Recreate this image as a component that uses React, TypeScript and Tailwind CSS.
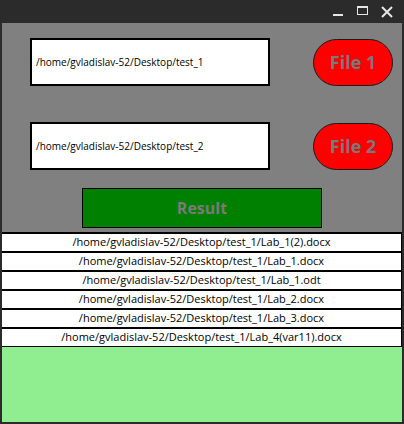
import React from 'react';

const files = [
  '/home/gvladislav-52/Desktop/test_1/Lab_1(2).docx',
  '/home/gvladislav-52/Desktop/test_1/Lab_1.docx',
  '/home/gvladislav-52/Desktop/test_1/Lab_1.odt',
  '/home/gvladislav-52/Desktop/test_1/Lab_2.docx',
  '/home/gvladislav-52/Desktop/test_1/Lab_3.docx',
  '/home/gvladislav-52/Desktop/test_1/Lab_4(var11).docx',
];

const font = { fontFamily: '"Open Sans", "Noto Sans", sans-serif' };

function PathRow({ path, label }: { path: string; label: string }) {
  return (
    <div className="flex items-center h-[48px] pl-[28px]">
      <div className="w-[240px] h-[48px] border-2 border-black bg-white flex items-center px-[4px] text-[10px] text-black">
        {path}
      </div>
      <button
        type="button"
        className="ml-[43px] w-[80px] h-[47px] rounded-full border border-[#1a1a1a] bg-[#ff0000] text-[18px] font-bold text-[#7a7a7a]"
      >
        {label}
      </button>
    </div>
  );
}

export default function App() {
  return (
    <div className="w-[404px] h-[424px] bg-[#2b2b2b] flex flex-col" style={font}>
      {/* title bar */}
      <div className="h-[23px] flex items-center justify-end gap-[13px] pr-[11px] shrink-0">
        <svg width="11" height="11" viewBox="0 0 11 11">
          <rect x="0" y="8" width="10" height="2" fill="#e6e6e6" />
        </svg>
        <svg width="11" height="11" viewBox="0 0 11 11">
          <rect x="0.5" y="0.5" width="10" height="8" fill="none" stroke="#e6e6e6" />
          <rect x="0" y="0" width="11" height="2" fill="#e6e6e6" />
        </svg>
        <svg width="12" height="12" viewBox="0 0 12 12">
          <path d="M1 1 L11 11 M11 1 L1 11" stroke="#e6e6e6" strokeWidth="2" />
        </svg>
      </div>

      <div className="flex-1 mx-[2px] mb-[2px] flex flex-col">
        <div className="bg-[#808080] pt-[15px] pb-[4px] flex flex-col">
          <PathRow path="/home/gvladislav-52/Desktop/test_1" label="File 1" />
          <div className="mt-[36px]">
            <PathRow path="/home/gvladislav-52/Desktop/test_2" label="File 2" />
          </div>
          <button
            type="button"
            className="mt-[18px] ml-[80px] w-[240px] h-[40px] border border-black bg-[#008000] text-[16px] font-bold text-[#7a7a7a]"
          >
            Result
          </button>
        </div>

        <div className="flex flex-col border-b border-black">
          {files.map((f) => (
            <div
              key={f}
              className="h-[19px] border-t-2 border-r border-black bg-white flex items-center justify-center text-[11px] text-black"
            >
              {f}
            </div>
          ))}
        </div>

        <div className="flex-1 bg-[#90ee90]" />
      </div>
    </div>
  );
}
